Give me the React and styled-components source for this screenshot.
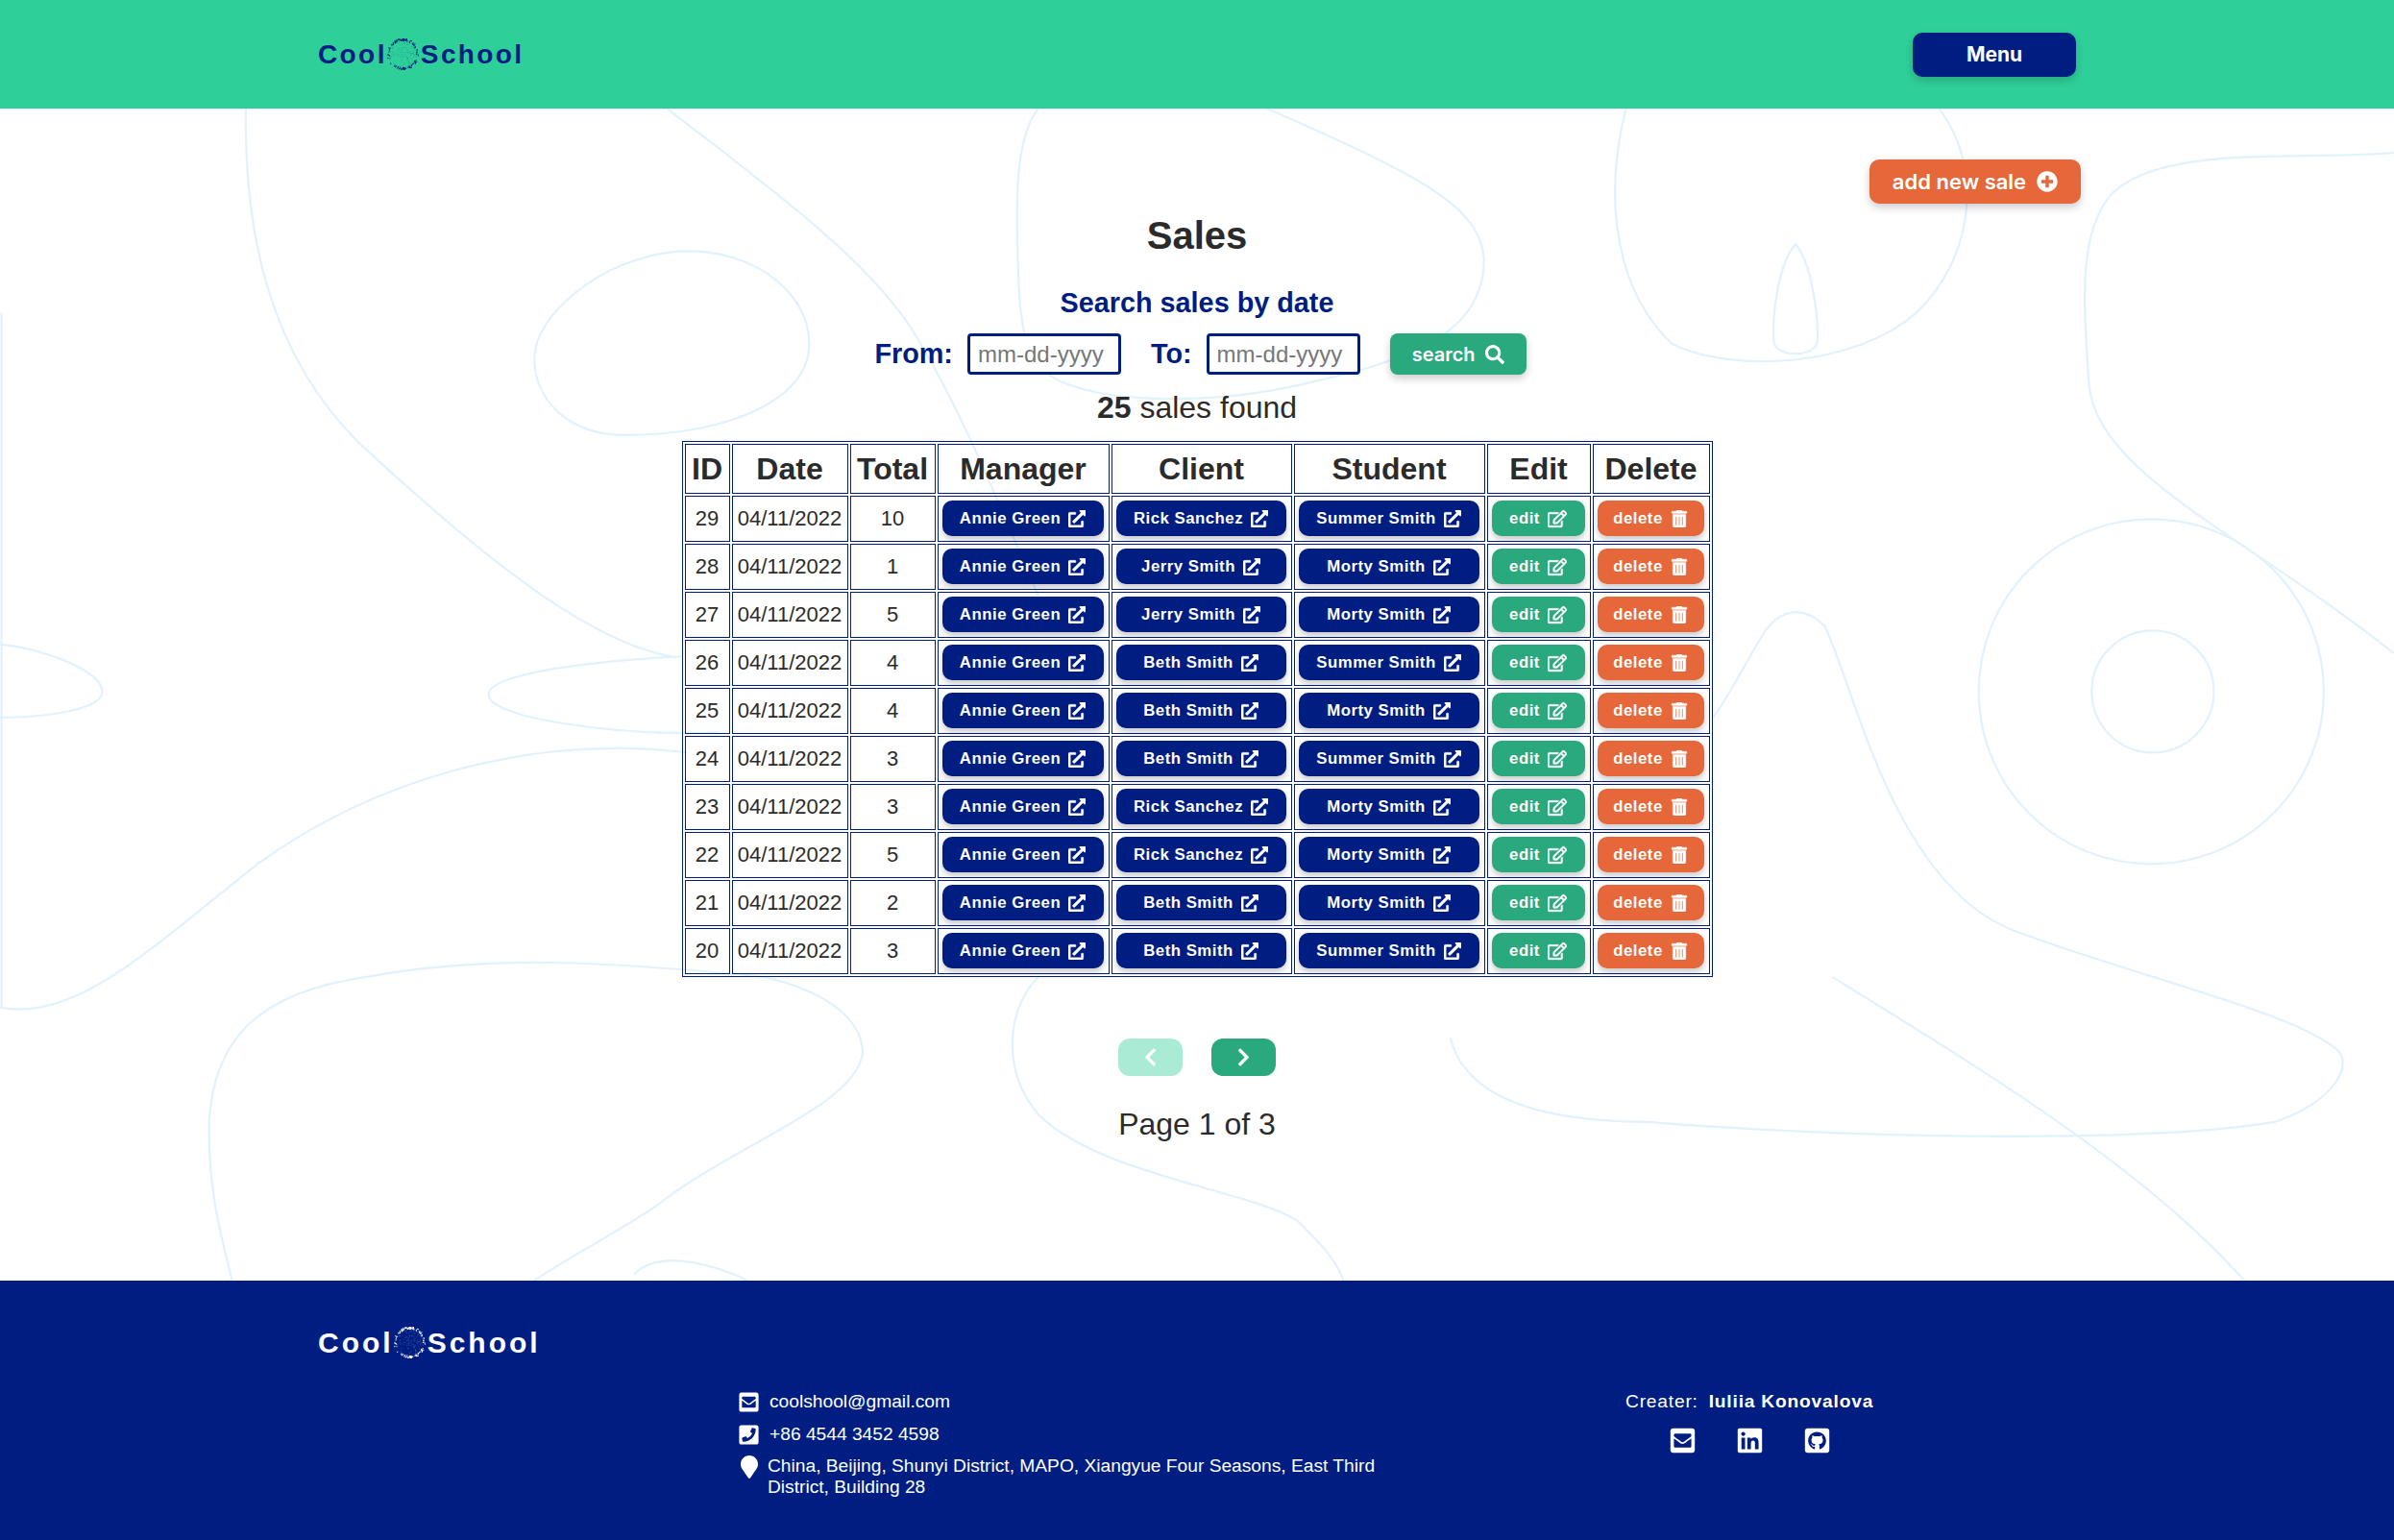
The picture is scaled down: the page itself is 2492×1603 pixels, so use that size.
import React from 'react'
import styled, { createGlobalStyle } from 'styled-components'
import {
    FaEnvelopeSquare, FaPhoneSquare, FaMapMarker, FaLinkedin, FaGithubSquare,
    FaPlusCircle, FaSearch, FaExternalLinkAlt, FaRegEdit, FaTrashAlt, FaChevronLeft, FaChevronRight,
} from 'react-icons/fa'

const NAVY = '#001e82'
const MINT = '#2fcf9a'
const GREEN = '#2aa87e'
const ORANGE = '#e5673a'
const INK = '#2b2b2b'

const GlobalStyle = createGlobalStyle`
    html, body {
        margin: 0;
        padding: 0;
        background: #fff;
    }
    * {
        box-sizing: border-box;
    }
    body {
        font-family: "Liberation Sans", Arial, sans-serif;
        color: ${INK};
    }
`

const Page = styled.div`
    width: 2492px;
    height: 1603px;
    display: flex;
    flex-direction: column;
    overflow: hidden;
`
const Header = styled.header`
    height: 113px;
    flex: none;
    background: ${MINT};
    display: flex;
    align-items: center;
    justify-content: space-between;
    padding: 0 331px;
`
const LogoWrap = styled.div`
    display: flex;
    align-items: center;
    font-weight: 700;
    color: ${p => p.$color};
    font-size: ${p => p.$size}px;
    letter-spacing: ${p => p.$spacing}px;
    line-height: 1;
`
const Globe = styled.svg`
    flex: none;
    margin: 0 2px 0 0;
`
const MenuButton = styled.button`
    width: 170px;
    height: 46px;
    border: 0;
    border-radius: 10px;
    background: ${NAVY};
    color: #fff;
    font-family: Inter, sans-serif;
    font-weight: 700;
    font-size: 21px;
    box-shadow: 0 4px 8px rgba(0, 0, 0, 0.18);
`
const Main = styled.main`
    position: relative;
    flex: 1;
    display: flex;
    flex-direction: column;
    align-items: center;
    padding-top: 53px;
`
const Contours = styled.svg`
    position: absolute;
    left: 0;
    top: 0;
    width: 100%;
    height: 100%;
    fill: none;
    stroke: #e2f2fd;
    stroke-width: 1.4;
`
const Content = styled.div`
    position: relative;
    width: 100%;
    display: flex;
    flex-direction: column;
    align-items: center;
`
const AddRow = styled.div`
    width: 100%;
    display: flex;
    justify-content: flex-end;
    padding-right: 326px;
`
const AddButton = styled.button`
    width: 220px;
    height: 46px;
    border: 0;
    border-radius: 10px;
    background: ${ORANGE};
    color: #fff;
    font-family: Inter, sans-serif;
    font-weight: 600;
    font-size: 22px;
    display: flex;
    align-items: center;
    justify-content: center;
    gap: 11px;
    box-shadow: 0 4px 8px rgba(0, 0, 0, 0.2);
`
const Title = styled.h1`
    margin: 9px 0 0;
    font-size: 40px;
    line-height: 48px;
    font-weight: 700;
    color: ${INK};
`
const SearchTitle = styled.h2`
    margin: 29px 0 0;
    font-size: 28.8px;
    line-height: 34px;
    font-weight: 700;
    color: ${NAVY};
`
const SearchForm = styled.form`
    margin-top: 15px;
    padding-left: 7px;
    display: flex;
    align-items: center;
`
const FieldLabel = styled.label`
    font-size: 28.8px;
    font-weight: 700;
    color: ${NAVY};
    margin-right: 15px;
`
const DateInput = styled.input`
    width: 160px;
    height: 43px;
    border: 3px solid ${NAVY};
    border-radius: 4px;
    padding: 0 0 0 8px;
    margin-right: 31px;
    background: #fff;
    font-family: "Liberation Sans", Arial, sans-serif;
    font-size: 24px;
    &::placeholder {
        color: #777;
        opacity: 1;
    }
`
const SearchButton = styled.button`
    width: 142px;
    height: 43px;
    border: 0;
    border-radius: 8px;
    background: ${GREEN};
    color: #fff;
    font-family: Inter, sans-serif;
    font-weight: 600;
    font-size: 20px;
    display: flex;
    align-items: center;
    justify-content: center;
    gap: 10px;
    box-shadow: 0 4px 8px rgba(0, 0, 0, 0.2);
`
const Count = styled.p`
    margin: 15px 0 0;
    font-size: 32px;
    line-height: 38px;
    color: ${INK};
`
const Table = styled.table`
    margin-top: 16px;
    width: 1073px;
    table-layout: fixed;
    border-collapse: separate;
    border-spacing: 2px;
    border: 1px solid ${NAVY};
    color: ${INK};
`
const HeadCell = styled.th`
    height: 52px;
    padding: 0;
    border: 1px solid ${NAVY};
    font-size: 32px;
    font-weight: 700;
    text-align: center;
`
const Cell = styled.td`
    height: 48px;
    padding: 0;
    border: 1px solid ${NAVY};
    font-size: 22px;
    text-align: center;
`
const ActionCell = styled(Cell)`
    padding: 4px 5px 5px 4px;
`
const RowButton = styled.button`
    width: 100%;
    height: 37px;
    border: 0;
    border-radius: 10px;
    background: ${p => p.$bg};
    color: #fff;
    font-family: "Liberation Sans", Arial, sans-serif;
    font-weight: 700;
    font-size: 16.8px;
    letter-spacing: 0.5px;
    display: flex;
    align-items: center;
    justify-content: center;
    gap: 8px;
    box-shadow: 0 4px 6px rgba(0, 0, 0, 0.2);
    & svg {
        stroke: currentColor;
        stroke-width: 12;
    }
`
const Pager = styled.div`
    margin-top: 64px;
    display: flex;
    gap: 30px;
`
const PagerButton = styled.button`
    width: 67px;
    height: 39px;
    border: 0;
    border-radius: 12px;
    background: ${p => (p.disabled ? '#a9ebd5' : GREEN)};
    color: #fff;
    display: flex;
    align-items: center;
    justify-content: center;
`
const PageText = styled.p`
    margin: 32px 0 0;
    font-size: 32px;
    line-height: 37px;
    color: ${INK};
`
const Footer = styled.footer`
    height: 270px;
    flex: none;
    background: ${NAVY};
    color: #fff;
    padding: 48px 331px 0;
`
const FooterBody = styled.div`
    margin-top: 28px;
    display: flex;
    align-items: flex-start;
    padding-left: 437px;
`
const Contacts = styled.div`
    width: 924px;
    display: flex;
    flex-direction: column;
`
const ContactRow = styled.div`
    display: flex;
    align-items: center;
    height: 34px;
    font-size: 19.2px;
    gap: 10px;
`
const AddressRow = styled.div`
    display: flex;
    align-items: flex-start;
    margin-top: 5px;
    font-size: 19.2px;
    line-height: 22px;
    gap: 7px;
    max-width: 670px;
    & svg {
        flex: none;
    }
`
const Creator = styled.div`
    display: flex;
    flex-direction: column;
    align-items: center;
`
const CreatorLine = styled.div`
    height: 33px;
    display: flex;
    align-items: center;
    gap: 11px;
    font-size: 19.2px;
    letter-spacing: 0.8px;
`
const Socials = styled.div`
    margin-top: 10px;
    display: flex;
    gap: 41px;
    font-size: 29px;
`
const SocialLink = styled.a`
    color: #fff;
    display: flex;
`

// stippled globe, rim is denser at the top and bottom
const globeDots = (() => {
    const dots = []
    let seed = 7
    const rnd = () => {
        seed = (seed * 9301 + 49297) % 233280
        return seed / 233280
    }
    for (let i = 0; i < 260; i++) {
        const a = rnd() * Math.PI * 2
        const r = 13.5 + rnd() * 2.5
        const cap = Math.pow(Math.abs(Math.sin(a)), 3)
        if (rnd() < 0.15 + cap * 0.85) dots.push([16 + r * Math.cos(a), 16 + r * Math.sin(a), 0.65])
    }
    for (let i = 0; i < 130; i++) {
        const a = rnd() * Math.PI * 2
        const r = Math.sqrt(rnd()) * 14
        dots.push([16 + r * Math.cos(a), 16 + r * Math.sin(a), 0.4])
    }
    return dots
})()

function Logo({ color, size, spacing }) {
    return (
        <LogoWrap $color={color} $size={size} $spacing={spacing}>
            <span>Cool</span>
            <Globe width={33} height={33} viewBox="0 0 32 32">
                {globeDots.map((d, i) => (
                    <circle key={i} cx={d[0]} cy={d[1]} r={d[2]} fill={color} opacity={d[2] < 0.5 ? 0.35 : 0.9} />
                ))}
            </Globe>
            <span>School</span>
        </LogoWrap>
    )
}

const sales = [
    [29, 10, 'Annie Green', 'Rick Sanchez', 'Summer Smith'],
    [28, 1, 'Annie Green', 'Jerry Smith', 'Morty Smith'],
    [27, 5, 'Annie Green', 'Jerry Smith', 'Morty Smith'],
    [26, 4, 'Annie Green', 'Beth Smith', 'Summer Smith'],
    [25, 4, 'Annie Green', 'Beth Smith', 'Morty Smith'],
    [24, 3, 'Annie Green', 'Beth Smith', 'Summer Smith'],
    [23, 3, 'Annie Green', 'Rick Sanchez', 'Morty Smith'],
    [22, 5, 'Annie Green', 'Rick Sanchez', 'Morty Smith'],
    [21, 2, 'Annie Green', 'Beth Smith', 'Morty Smith'],
    [20, 3, 'Annie Green', 'Beth Smith', 'Summer Smith'],
]

const columns = [
    ['ID', 47], ['Date', 121], ['Total', 89], ['Manager', 179],
    ['Client', 188], ['Student', 199], ['Edit', 108], ['Delete', 122],
]

function PersonButton({ name }) {
    return (
        <RowButton $bg={NAVY}>
            {name} <FaExternalLinkAlt size={18} />
        </RowButton>
    )
}

function App() {
    return (
        <Page>
            <GlobalStyle />
            <Header>
                <Logo color={NAVY} size={28} spacing={2.4} />
                <MenuButton>Menu</MenuButton>
            </Header>
            <Main>
                {/* contour lines behind the content, traced at 1568 wide */}
                <Contours viewBox="0 71 1568 768" preserveAspectRatio="none">
                    <path d="M161 71C160 150 175 230 235 290C300 350 380 420 440 430" />
                    <path d="M437 71C500 120 570 170 600 220C630 270 650 320 680 390" />
                    <path d="M440 165C490 160 530 190 530 225C530 265 470 285 410 285C370 285 350 260 350 235C350 205 395 170 440 165Z" />
                    <path d="M680 71C665 90 665 130 667 180C668 215 672 240 695 250C730 265 800 265 860 250C930 235 972 215 972 170C970 135 930 115 830 71" />
                    <path d="M1065 71C1050 130 1058 190 1095 225C1135 245 1215 240 1255 205C1292 170 1300 110 1270 71" />
                    <path d="M1176 160C1186 170 1192 210 1190 225C1186 234 1166 234 1162 225C1160 205 1166 170 1176 160Z" />
                    <path d="M1568 100C1500 105 1420 95 1385 125C1360 150 1365 200 1368 250C1372 310 1470 350 1568 428" />
                    <circle cx="1409" cy="453" r="113" />
                    <circle cx="1410" cy="453" r="40" />
                    <path d="M0 422C30 425 67 440 67 453C67 465 30 470 0 470" />
                    <path d="M447 430C400 432 320 440 320 455C320 470 400 482 470 480" />
                    <path d="M0 660C50 670 100 620 170 565C240 515 340 480 450 493" />
                    <path d="M137 735C140 680 170 650 240 640C320 625 400 630 500 640C545 650 565 670 565 690C560 725 480 750 430 790C400 810 370 825 350 839" />
                    <path d="M137 735C136 780 145 810 152 839" />
                    <path d="M415 835C430 820 460 825 490 839" />
                    <path d="M680 640C660 660 655 700 680 730C720 770 820 780 850 800C865 815 875 825 880 839" />
                    <path d="M950 680C960 720 1010 735 1080 735C1200 745 1400 750 1490 735C1520 725 1540 705 1533 690C1510 665 1400 640 1320 610C1240 580 1215 450 1195 410C1180 395 1165 400 1155 415C1140 440 1130 460 1122 470" />
                    <path d="M1200 640C1280 690 1400 760 1470 839" />
                    <path d="M1 205L1 660" />
                </Contours>
                <Content>
                    <AddRow>
                        <AddButton>
                            add new sale <FaPlusCircle size={22} />
                        </AddButton>
                    </AddRow>
                    <Title>Sales</Title>
                    <SearchTitle>Search sales by date</SearchTitle>
                    <SearchForm>
                        <FieldLabel>From:</FieldLabel>
                        <DateInput placeholder="mm-dd-yyyy" />
                        <FieldLabel>To:</FieldLabel>
                        <DateInput placeholder="mm-dd-yyyy" />
                        <SearchButton type="button">
                            search <FaSearch size={20} />
                        </SearchButton>
                    </SearchForm>
                    <Count><b>25</b> sales found</Count>
                    <Table>
                        <colgroup>
                            {columns.map(c => <col key={c[0]} width={c[1]} />)}
                        </colgroup>
                        <thead>
                            <tr>
                                {columns.map(c => <HeadCell key={c[0]}>{c[0]}</HeadCell>)}
                            </tr>
                        </thead>
                        <tbody>
                            {sales.map(s => (
                                <tr key={s[0]}>
                                    <Cell>{s[0]}</Cell>
                                    <Cell>04/11/2022</Cell>
                                    <Cell>{s[1]}</Cell>
                                    <ActionCell><PersonButton name={s[2]} /></ActionCell>
                                    <ActionCell><PersonButton name={s[3]} /></ActionCell>
                                    <ActionCell><PersonButton name={s[4]} /></ActionCell>
                                    <ActionCell>
                                        <RowButton $bg={GREEN}>edit <FaRegEdit size={20} /></RowButton>
                                    </ActionCell>
                                    <ActionCell>
                                        <RowButton $bg={ORANGE}>delete <FaTrashAlt size={18} /></RowButton>
                                    </ActionCell>
                                </tr>
                            ))}
                        </tbody>
                    </Table>
                    <Pager>
                        <PagerButton disabled><FaChevronLeft size={21} /></PagerButton>
                        <PagerButton><FaChevronRight size={21} /></PagerButton>
                    </Pager>
                    <PageText>Page 1 of 3</PageText>
                </Content>
            </Main>
            <Footer>
                <Logo color="#fff" size={30} spacing={3} />
                <FooterBody>
                    <Contacts>
                        <ContactRow><FaEnvelopeSquare size={23} /> coolshool@gmail.com</ContactRow>
                        <ContactRow><FaPhoneSquare size={23} /> +86 4544 3452 4598</ContactRow>
                        <AddressRow>
                            <FaMapMarker size={24} />
                            <span>China, Beijing, Shunyi District, MAPO, Xiangyue Four Seasons, East Third District, Building 28</span>
                        </AddressRow>
                    </Contacts>
                    <Creator>
                        <CreatorLine>
                            <span>Creater:</span> <b>Iuliia Konovalova</b>
                        </CreatorLine>
                        <Socials>
                            <SocialLink><FaEnvelopeSquare /></SocialLink>
                            <SocialLink><FaLinkedin /></SocialLink>
                            <SocialLink><FaGithubSquare /></SocialLink>
                        </Socials>
                    </Creator>
                </FooterBody>
            </Footer>
        </Page>
    )
}

export default App
